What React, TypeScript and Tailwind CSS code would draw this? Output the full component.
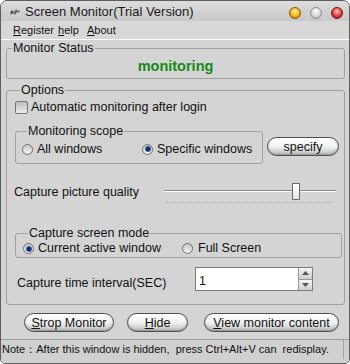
import React from "react";

function Radio({ checked }: { checked?: boolean }) {
  return (
    <span className="w-[11px] h-[11px] rounded-full border border-[#6f6f6f] bg-gradient-to-b from-[#c8c8c8] to-[#f4f4f4] flex items-center justify-center shrink-0">
      {checked && (
        <span className="w-[6px] h-[6px] rounded-full bg-[radial-gradient(circle,#0b1a3a_0%,#1d3f8a_45%,#6f9be0_100%)]" />
      )}
    </span>
  );
}

function PillButton({ w, children }: { w: string; children: React.ReactNode }) {
  return (
    <div
      className={`${w} h-[19px] rounded-full border border-[#4f4f4f] bg-gradient-to-b from-[#ffffff] via-[#f2f2f2] to-[#bdbdbd] shadow-[inset_0_-1px_2px_rgba(0,0,0,0.25)] flex items-center justify-center text-[12.5px] leading-[14px] text-[#111]`}
    >
      {children}
    </div>
  );
}

function Circle({ cls }: { cls: string }) {
  return <span className={`w-[12px] h-[12px] rounded-full border ${cls}`} />;
}

export default function App() {
  return (
    <div className="w-[350px] h-[364px] bg-white">
      <div className="w-[350px] h-[364px] flex flex-col border border-[#5e5e5e] rounded-t-[7px] rounded-b-[5px] overflow-hidden bg-[#d4d4d4] font-['Liberation_Sans',sans-serif] text-[12.5px] text-[#111]">
        {/* Title bar */}
        <div className="h-[20px] shrink-0 flex items-center bg-gradient-to-b from-[#dedede] via-[#d2d2d2] to-[#c9c9c9]">
          <svg width="12" height="8" viewBox="0 0 12 8" className="ml-[8px] mt-[2px]">
            <path d="M1 5 L3 2 L5 4 L7 1 L9 3 L11 2 L10 5 L8 4 L6 7 L4 5 L2 7 Z" fill="#6a6a6a" />
            <circle cx="3" cy="4" r="0.8" fill="#222" />
          </svg>
          <span className="ml-[4px] text-[13px] leading-[16px] text-[#1a1a1a] mt-[1px]">Screen Monitor(Trial Version)</span>
          <div className="ml-auto mr-[6px] mt-[3px] flex items-center gap-[9px]">
            <Circle cls="border-[#8a5200] bg-[radial-gradient(circle_at_50%_35%,#fff3a0_0%,#f6b21a_55%,#c46a00_100%)]" />
            <Circle cls="border-[#8c8c8c] bg-[radial-gradient(circle_at_50%_35%,#ffffff_0%,#d6d6d6_55%,#a8a8a8_100%)]" />
            <Circle cls="border-[#7a1010] bg-[radial-gradient(circle_at_50%_35%,#ffc4c4_0%,#e03a3a_55%,#9a0c0c_100%)]" />
          </div>
        </div>

        {/* Menu bar */}
        <div className="h-[19px] shrink-0 flex items-center pl-[12px] bg-[#d8d8d8] border-b border-white text-[11px] leading-[13px]">
          <span className="w-[45px]"><span className="underline">R</span>egister</span>
          <span className="w-[29px]"><span className="underline">h</span>elp</span>
          <span><span className="underline">A</span>bout</span>
        </div>

        {/* Body */}
        <div className="flex flex-col pl-[5px] pr-[4px]">
          {/* Monitor Status */}
          <fieldset className="mt-[1px] border border-[#a0a0a0] rounded-[3px]">
            <legend className="ml-[5px] px-[1px] leading-[14px] text-[12.5px]">Monitor Status</legend>
            <div className="h-[23px] flex items-center justify-center font-bold text-[14.5px] text-[#168a16]">monitoring</div>
          </fieldset>

          {/* Options */}
          <fieldset className="mt-[4px] border border-[#a0a0a0] rounded-[3px] pl-[8px] pb-[13px]">
            <legend className="ml-[5px] px-[1px] leading-[14px] text-[12.5px]">Options</legend>

            <div className="mt-[3px] h-[15px] flex items-center">
              <span className="w-[13px] h-[13px] rounded-[2px] border border-[#777] bg-gradient-to-b from-[#bdbdbd] to-[#ececec]" />
              <span className="ml-[3px]">Automatic monitoring after login</span>
            </div>

            <div className="flex items-start mt-[9px]">
              <fieldset className="w-[248px] border border-[#a0a0a0] rounded-[3px] pl-[6px] pb-[5px]">
                <legend className="ml-[5px] px-[1px] leading-[14px]">Monitoring scope</legend>
                <div className="h-[18px] mt-[2px] flex items-center">
                  <div className="w-[120px] flex items-center">
                    <Radio />
                    <span className="ml-[4px]">All windows</span>
                  </div>
                  <div className="flex items-center">
                    <Radio checked />
                    <span className="ml-[4px]">Specific windows</span>
                  </div>
                </div>
              </fieldset>
              <div className="ml-[4px] mt-[13px]">
                <PillButton w="w-[72px]">specify</PillButton>
              </div>
            </div>

            <div className="mt-[18px] h-[20px] flex items-center">
              <span className="w-[150px] -ml-[1px]">Capture picture quality</span>
              <div className="relative w-[172px] h-[20px]">
                <div className="absolute left-0 right-0 top-[8px] h-[2px] bg-[#8a8a8a] border-b border-white" />
                <div className="absolute left-[128px] top-[1px] w-[8px] h-[17px] border border-[#6a6a6a] bg-gradient-to-b from-white to-[#e4e4e4]" />
                <div className="absolute left-[2px] right-[4px] top-[20px] h-[1px] border-t border-dotted border-[#a8a8a8]" />
              </div>
            </div>

            <fieldset className="mt-[24px] w-[327px] border border-[#a0a0a0] rounded-[3px] pl-[7px]">
              <legend className="ml-[5px] px-[1px] leading-[14px]">Capture screen mode</legend>
              <div className="h-[17px] flex items-center">
                <div className="w-[159px] flex items-center">
                  <Radio checked />
                  <span className="ml-[4px]">Current active window</span>
                </div>
                <div className="flex items-center">
                  <Radio />
                  <span className="ml-[5px]">Full Screen</span>
                </div>
              </div>
            </fieldset>

            <div className="mt-[9px] h-[24px] flex items-start">
              <span className="w-[178px] ml-[2px] mt-[9px] leading-[14px]">Capture time interval(SEC)</span>
              <div className="w-[118px] h-[24px] flex border border-[#7b7b7b] bg-white">
                <span className="flex-1 pl-[3px] pt-[6px] leading-[14px]">1</span>
                <div className="w-[14px] flex flex-col border-l border-[#9a9a9a]">
                  <div className="flex-1 flex items-center justify-center bg-gradient-to-b from-[#f4f4f4] to-[#cfcfcf] border-b border-[#9a9a9a]">
                    <svg width="7" height="4" viewBox="0 0 7 4"><path d="M0 4 L3.5 0 L7 4 Z" fill="#555" /></svg>
                  </div>
                  <div className="flex-1 flex items-center justify-center bg-gradient-to-b from-[#f4f4f4] to-[#cfcfcf]">
                    <svg width="7" height="4" viewBox="0 0 7 4"><path d="M0 0 L3.5 4 L7 0 Z" fill="#555" /></svg>
                  </div>
                </div>
              </div>
            </div>
          </fieldset>

          {/* Buttons */}
          <div className="mt-[8px] flex items-center">
            <div className="ml-[18px]">
              <PillButton w="w-[90px]"><span><span className="underline">S</span>trop Monitor</span></PillButton>
            </div>
            <div className="ml-[13px]">
              <PillButton w="w-[61px]"><span><span className="underline">H</span>ide</span></PillButton>
            </div>
            <div className="ml-[16px]">
              <PillButton w="w-[135px]"><span><span className="underline">V</span>iew monitor content</span></PillButton>
            </div>
          </div>
        </div>

        {/* Status bar */}
        <div className="mt-[7px] h-[20px] shrink-0 flex items-center border-t border-[#9c9c9c] bg-[#d0d0d0] text-[11px] leading-[13px]">
          <span className="w-[343px] pl-[1px] border-r border-[#a4a4a4] h-full flex items-center">Note：After this window is hidden,&nbsp; press Ctrl+Alt+V can&nbsp; redisplay.</span>
        </div>
        <div className="flex-1 bg-[#cfcfcf]" />
      </div>
    </div>
  );
}
